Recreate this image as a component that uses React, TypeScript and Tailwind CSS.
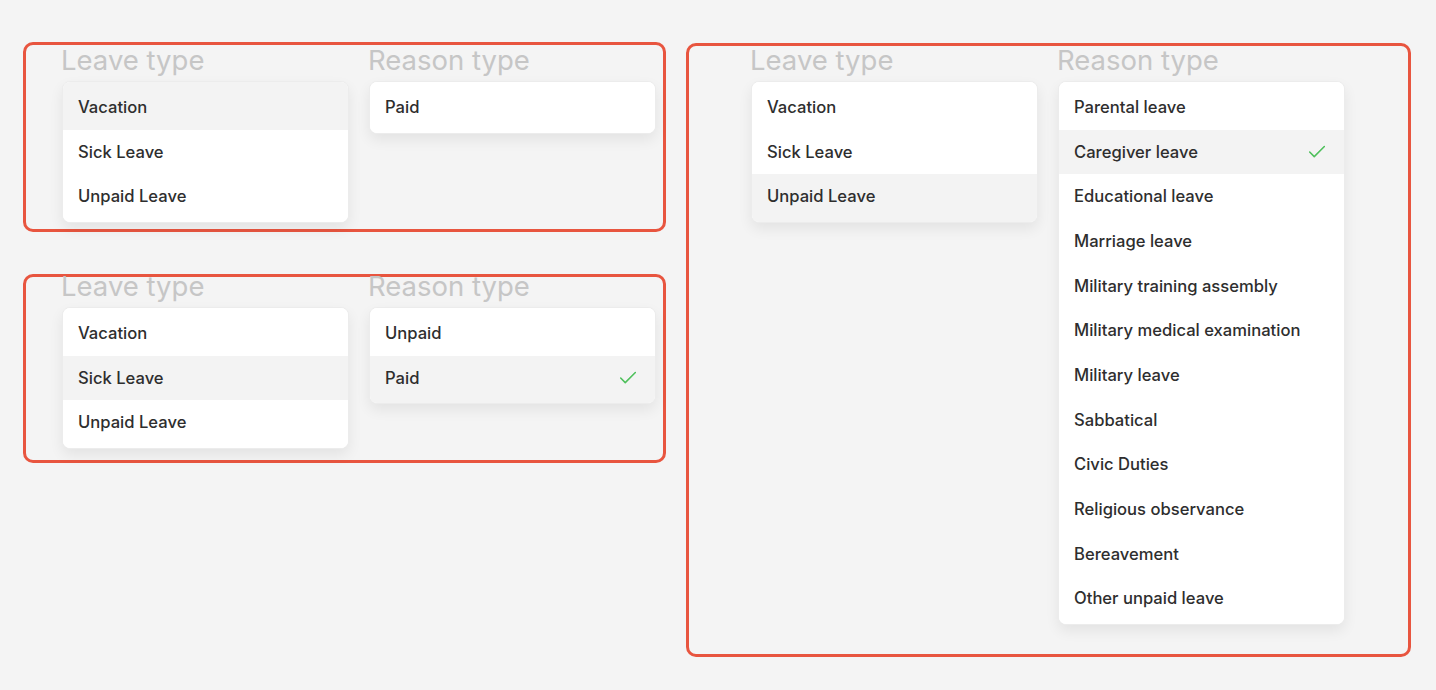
import { Check } from "lucide-react";

interface Option {
  label: string;
  active?: boolean;
  checked?: boolean;
}

interface DropdownProps {
  options: Option[];
}

const Dropdown: React.FC<DropdownProps> = ({ options }) => {
  return (
    <div className="w-[287px] bg-white rounded-[8px] border border-[#ececec] shadow-[0_6px_14px_rgba(0,0,0,0.07)] overflow-hidden">
      {options.map((o, i) => (
        <div
          key={o.label}
          className={[
            "flex items-center justify-between pl-[15px] pr-[16px] h-[44.7px] box-content",
            i === 0 ? "pt-[3px]" : "",
            i === options.length - 1 ? "pb-[3px]" : "",
            o.active ? "bg-[#f3f3f3]" : "bg-white",
          ].join(" ")}
        >
          <span className="text-[16.6px] text-[#2e2e2e] font-[450]">{o.label}</span>
          {o.checked && <Check className="w-[22px] h-[22px] text-[#4fc05c]" strokeWidth={1.7} />}
        </div>
      ))}
    </div>
  );
};

interface ColumnProps {
  title: string;
  options: Option[];
  offset?: string;
}

const Column: React.FC<ColumnProps> = ({ title, options, offset = "-mt-[1px]" }) => {
  return (
    <div className="flex flex-col">
      <span className={`text-[27.5px] leading-[32px] text-[#c6c6c6] -ml-[1px] ${offset}`}>
        {title}
      </span>
      <div className="mt-[5px]">
        <Dropdown options={options} />
      </div>
    </div>
  );
};

const leave = (active: number): Option[] =>
  ["Vacation", "Sick Leave", "Unpaid Leave"].map((l, i) => ({ label: l, active: i === active }));

const reasons = [
  "Parental leave",
  "Caregiver leave",
  "Educational leave",
  "Marriage leave",
  "Military training assembly",
  "Military medical examination",
  "Military leave",
  "Sabbatical",
  "Civic Duties",
  "Religious observance",
  "Bereavement",
  "Other unpaid leave",
].map((l, i) => ({ label: l, active: i === 1, checked: i === 1 }));

export default function App() {
  return (
    <div
      className="w-[1436px] h-[690px] bg-[#f4f4f4] flex gap-[20px] pl-[23px] pt-[42px]"
      style={{ fontFamily: "Inter, 'Noto Sans', sans-serif" }}
    >
      <div className="flex flex-col gap-[42px]">
        <div className="w-[643px] h-[190px] border-[3px] border-[#e8553f] rounded-[10px] flex gap-[20px] pl-[36px]">
          <Column title="Leave type" options={leave(0)} />
          <Column title="Reason type" options={[{ label: "Paid" }]} />
        </div>
        <div className="w-[643px] h-[189px] border-[3px] border-[#e8553f] rounded-[10px] flex gap-[20px] pl-[36px]">
          <Column title="Leave type" options={leave(1)} offset="-mt-[7px]" />
          <Column
            title="Reason type"
            options={[{ label: "Unpaid" }, { label: "Paid", active: true, checked: true }]}
            offset="-mt-[7px]"
          />
        </div>
      </div>
      <div className="w-[725px] h-[614px] mt-[1px] border-[3px] border-[#e8553f] rounded-[10px] flex gap-[20px] pl-[62px]">
        <Column title="Leave type" options={leave(2)} offset="-mt-[2px]" />
        <Column title="Reason type" options={reasons} offset="-mt-[2px]" />
      </div>
    </div>
  );
}
